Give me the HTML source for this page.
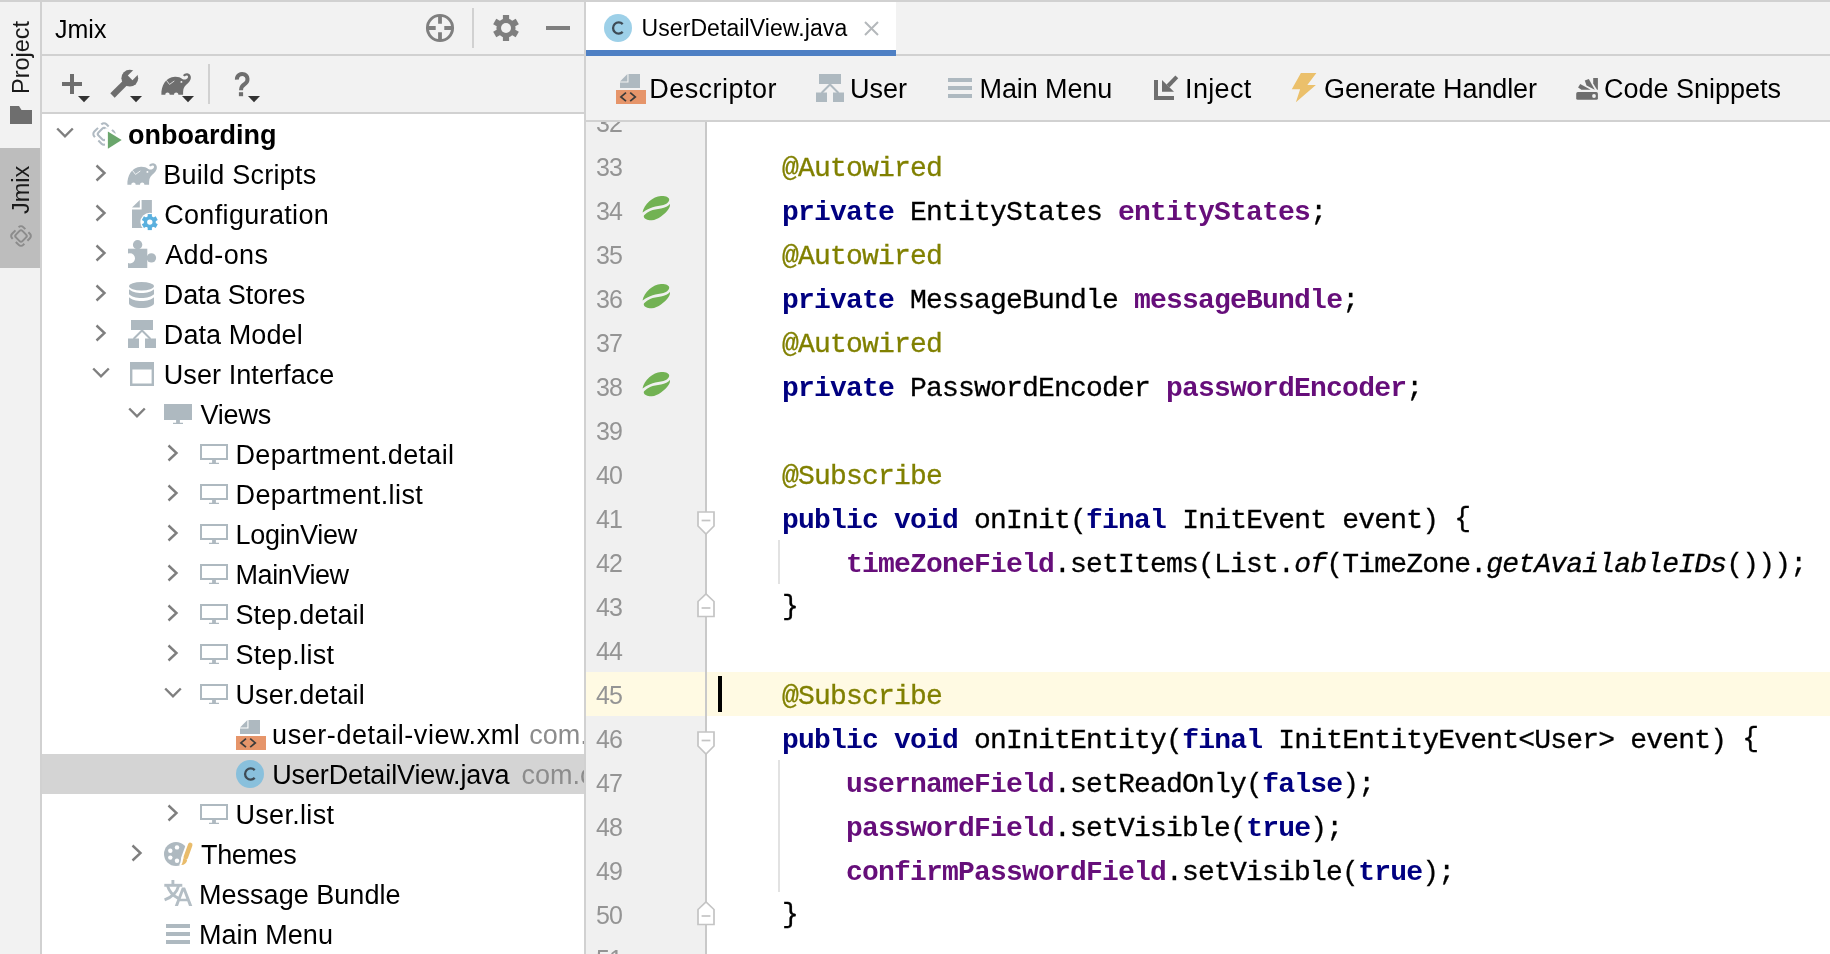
<!DOCTYPE html>
<html><head><meta charset="utf-8"><title>UserDetailView.java</title>
<style>
html,body{margin:0;padding:0}
body{width:1830px;height:954px;overflow:hidden;background:#fff;font-family:"Liberation Sans",sans-serif}
#root{position:absolute;left:0;top:0;width:1830px;height:954px;overflow:hidden;background:#fff;will-change:transform}
.b,.t,.i,.v,.clip,.ln,.c{position:absolute}
.i{display:block;overflow:visible}
.t{white-space:pre;font-family:"Liberation Sans",sans-serif}
.v{writing-mode:vertical-rl;transform:rotate(180deg);white-space:pre;width:26px;line-height:26px;color:#1a1a1a;text-align:center}
.clip{overflow:hidden}
.ln{left:10px;width:40px;font-family:"Liberation Sans",sans-serif;font-size:25px;letter-spacing:-1px;line-height:44px;color:#949494;white-space:pre}
.c{left:132px;font-family:"Liberation Mono",monospace;font-size:28px;letter-spacing:-0.8px;line-height:44px;color:#000;white-space:pre}
.c{-webkit-text-stroke:0.3px}.c b{-webkit-text-stroke:0}
.k{color:#000080}.a{color:#808000}.f{color:#660e7a}
.br{position:relative;top:-2px}
</style></head>
<body>
<div id="root">
<div class="b" style="left:0px;top:0px;width:1830px;height:2px;background:#d1d1d1;"></div>
<div class="b" style="left:0px;top:2px;width:40px;height:952px;background:#f2f2f2;"></div>
<div class="b" style="left:0px;top:148px;width:40px;height:120px;background:#bdbdbd;"></div>
<div class="b" style="left:40px;top:2px;width:2px;height:952px;background:#d1d1d1;"></div>
<div class="b" style="left:42px;top:2px;width:542px;height:52px;background:#f2f2f2;"></div>
<div class="b" style="left:42px;top:54px;width:542px;height:2px;background:#d1d1d1;"></div>
<div class="b" style="left:42px;top:56px;width:542px;height:56px;background:#f2f2f2;"></div>
<div class="b" style="left:42px;top:112px;width:542px;height:2px;background:#d1d1d1;"></div>
<div class="b" style="left:42px;top:754px;width:542px;height:40px;background:#d4d4d4;"></div>
<div class="b" style="left:584px;top:2px;width:2px;height:952px;background:#d1d1d1;"></div>
<div class="b" style="left:586px;top:2px;width:1244px;height:52px;background:#f2f2f2;"></div>
<div class="b" style="left:586px;top:2px;width:310px;height:52px;background:#fff;"></div>
<div class="b" style="left:586px;top:54px;width:1244px;height:2px;background:#d1d1d1;"></div>
<div class="b" style="left:586px;top:50px;width:310px;height:6px;background:#4f80c4;"></div>
<div class="b" style="left:586px;top:56px;width:1244px;height:64px;background:#f2f2f2;"></div>
<div class="b" style="left:586px;top:120px;width:1244px;height:2px;background:#d1d1d1;"></div>
<div class="b" style="left:586px;top:122px;width:119px;height:832px;background:#f0f0f0;"></div>
<div class="b" style="left:586px;top:672px;width:1244px;height:44px;background:#fffae3;"></div>
<div class="b" style="left:705px;top:122px;width:2px;height:832px;background:#c9c9c9;"></div>
<div class="b" style="left:718px;top:676px;width:4px;height:36px;background:#000;"></div>
<div class="b" style="left:778px;top:540px;width:1.5px;height:44px;background:#e2e2e2;"></div>
<div class="b" style="left:778px;top:760px;width:1.5px;height:132px;background:#e2e2e2;"></div>
<div id="vproj" class="v" style="left:8px;top:18px;height:78px;font-size:23.5px;letter-spacing:0px">Project</div>
<div id="vjmix" class="v" style="left:8px;top:163px;height:53px;font-size:23.5px;letter-spacing:0px">Jmix</div>
<svg class="i" style="left:10px;top:106px" width="22" height="18" viewBox="0 0 22 18" ><path d="M0 0H9L11.5 4H22V18H0Z" fill="#6e6e6e"/></svg>
<svg class="i" style="left:9px;top:223.5px" width="24" height="24" viewBox="0 0 24 24" ><g transform="translate(12 12) rotate(45)" fill="none" stroke="#8c8c8c" stroke-width="2" stroke-linecap="butt"><rect x="-7.9" y="-7.9" width="15.8" height="15.8" rx="3.2" stroke-dasharray="10.6 4.33" stroke-dashoffset="7.7"/><rect x="-4.6" y="-4.6" width="9.2" height="9.2" rx="2"/></g></svg>
<div id="hdr" class="t" style="left:55.0px;top:9px;font-size:25px;line-height:40px;color:#000;letter-spacing:0.0px;">Jmix</div>
<svg class="i" style="left:425px;top:13px" width="30" height="30" viewBox="0 0 30 30" ><circle cx="15" cy="15" r="12.6" fill="none" stroke="#7f7f7f" stroke-width="2.9"/><path d="M15 2V10.7M15 19.3V28M2 15H10.7M19.3 15H28" stroke="#7f7f7f" stroke-width="3.8"/></svg>
<div class="b" style="left:472px;top:8px;width:2px;height:40px;background:#d1d1d1;"></div>
<svg class="i" style="left:493px;top:15px" width="26" height="26" viewBox="0 0 26 26" ><g transform="translate(13 13)" fill="#7f7f7f"><rect x="-3.1" y="-13" width="6.2" height="8" transform="rotate(0)"/><rect x="-3.1" y="-13" width="6.2" height="8" transform="rotate(60)"/><rect x="-3.1" y="-13" width="6.2" height="8" transform="rotate(120)"/><rect x="-3.1" y="-13" width="6.2" height="8" transform="rotate(180)"/><rect x="-3.1" y="-13" width="6.2" height="8" transform="rotate(240)"/><rect x="-3.1" y="-13" width="6.2" height="8" transform="rotate(300)"/><circle r="9.6"/></g><circle cx="13" cy="13" r="5" fill="#f2f2f2"/></svg>
<div class="b" style="left:546px;top:26px;width:24px;height:4px;background:#7f7f7f;"></div>
<svg class="i" style="left:62px;top:74px" width="20" height="20" viewBox="0 0 20 20" ><path d="M10 0V20M0 10H20" stroke="#6e6e6e" stroke-width="4"/></svg>
<svg class="i" style="left:78.2px;top:95.7px" width="12" height="6.3" viewBox="0 0 12 6.3" ><path d="M0 0H12L6 6.3Z" fill="#333"/></svg>
<svg class="i" style="left:108px;top:68px" width="32" height="32" viewBox="0 0 32 32" ><g transform="translate(21.8 10.2) rotate(-45)"><circle r="8.4" fill="#6e6e6e"/><rect x="0.5" y="-3.3" width="10" height="6.6" fill="#f2f2f2"/><rect x="-24.5" y="-3.1" width="19" height="6.2" fill="#6e6e6e"/></g></svg>
<svg class="i" style="left:130.1px;top:95.7px" width="12" height="6.3" viewBox="0 0 12 6.3" ><path d="M0 0H12L6 6.3Z" fill="#333"/></svg>
<svg class="i" style="left:161px;top:73px" width="31" height="22" viewBox="0 0 31 22" ><path fill="#6e6e6e" d="M0.4 21.7C0.1 13 4.6 4 14 3.7C17 3.6 19.5 4.5 21.3 5.9C23 7.1 25.2 6.6 26.5 5.3C27.5 4.2 27.1 2.8 25.9 2.6C25 2.5 24.3 2.9 23.8 3.6L21.9 2.2C22.9 0.9 24.5 0.1 26.2 0.2C29.1 0.4 30.7 3.6 29.5 6.6C28.5 9.2 25.6 11.4 23.7 13.6C22.3 15.3 22.1 17.5 22.1 21.7L17.4 21.7C17.4 18.6 13 18.6 13 21.7L8.7 21.7C8.7 18.6 4.3 18.6 4.3 21.7Z"/><path d="M5.6 7.6L8.5 11.4L13 8.2" fill="none" stroke="#f2f2f2" stroke-width="0.8" stroke-linecap="round" stroke-linejoin="round"/><circle cx="20.4" cy="8.9" r="0.95" fill="#f2f2f2"/></svg>
<svg class="i" style="left:182.2px;top:95.7px" width="12" height="6.3" viewBox="0 0 12 6.3" ><path d="M0 0H12L6 6.3Z" fill="#333"/></svg>
<div class="b" style="left:208px;top:64px;width:2px;height:40px;background:#d1d1d1;"></div>
<svg class="i" style="left:230.5px;top:69px" width="22" height="30" viewBox="0 0 22 30" ><path d="M5.9 10.6A5.3 5.3 0 1 1 14.5 14.4C11.6 16.4 10 17.6 10 21.2" fill="none" stroke="#6e6e6e" stroke-width="4"/><rect x="7.9" y="23.2" width="4.2" height="4" fill="#6e6e6e"/></svg>
<svg class="i" style="left:248px;top:95.7px" width="12" height="6.3" viewBox="0 0 12 6.3" ><path d="M0 0H12L6 6.3Z" fill="#333"/></svg>
<div class="clip" style="left:42px;top:114px;width:542px;height:840px">
<svg class="i" style="left:14px;top:13px" width="18" height="12" viewBox="0 0 18 12" ><path d="M1.2 1.5 L9 9.3 L16.8 1.5" fill="none" stroke="#7f7f7f" stroke-width="2.4"/></svg>
<svg class="i" style="left:49px;top:7px" width="26" height="26" viewBox="0 0 24 24" ><g transform="translate(12 12) rotate(45)" fill="none" stroke="#b0bac2" stroke-width="1.9" stroke-linecap="butt"><rect x="-7.9" y="-7.9" width="15.8" height="15.8" rx="3.2" stroke-dasharray="10.6 4.33" stroke-dashoffset="7.7"/><rect x="-4.6" y="-4.6" width="9.2" height="9.2" rx="2"/></g></svg><svg class="i" style="left:63px;top:15px" width="18" height="22" viewBox="0 0 18 22" ><path d="M1.2 0.4L17.6 10.6L1.2 21.2Z" fill="#fff" stroke="#fff" stroke-width="2.4" stroke-linejoin="round"/><path d="M2.9 2.6L16.7 11L2.9 19.8Z" fill="#6aa66c"/></svg>
<div id="r0" class="t" style="left:86.1px;top:1px;font-size:27px;line-height:40px;color:#000;font-weight:bold;letter-spacing:-0.021px;">onboarding</div>
<svg class="i" style="left:53px;top:50px" width="12" height="18" viewBox="0 0 12 18" ><path d="M1.5 1.5 L9.5 9 L1.5 16.5" fill="none" stroke="#7f7f7f" stroke-width="2.4"/></svg>
<svg class="i" style="left:85px;top:49px" width="31" height="22" viewBox="0 0 31 22" ><path fill="#aeb9c0" d="M0.4 21.7C0.1 13 4.6 4 14 3.7C17 3.6 19.5 4.5 21.3 5.9C23 7.1 25.2 6.6 26.5 5.3C27.5 4.2 27.1 2.8 25.9 2.6C25 2.5 24.3 2.9 23.8 3.6L21.9 2.2C22.9 0.9 24.5 0.1 26.2 0.2C29.1 0.4 30.7 3.6 29.5 6.6C28.5 9.2 25.6 11.4 23.7 13.6C22.3 15.3 22.1 17.5 22.1 21.7L17.4 21.7C17.4 18.6 13 18.6 13 21.7L8.7 21.7C8.7 18.6 4.3 18.6 4.3 21.7Z"/><path d="M5.6 7.6L8.5 11.4L13 8.2" fill="none" stroke="#fff" stroke-width="0.8" stroke-linecap="round" stroke-linejoin="round"/><circle cx="20.4" cy="8.9" r="0.95" fill="#fff"/></svg>
<div id="r1" class="t" style="left:121.2px;top:41px;font-size:27px;line-height:40px;color:#000;letter-spacing:0.25px;">Build Scripts</div>
<svg class="i" style="left:53px;top:90px" width="12" height="18" viewBox="0 0 12 18" ><path d="M1.5 1.5 L9.5 9 L1.5 16.5" fill="none" stroke="#7f7f7f" stroke-width="2.4"/></svg>
<svg class="i" style="left:90px;top:86px" width="27" height="31" viewBox="0 0 27 31" ><path d="M0 7.6L7.8 0V7.6Z" fill="#aeb9c0"/><path d="M9.6 0H19.9V28H0V9.5H9.6Z" fill="#aeb9c0"/><circle cx="17.8" cy="22.1" r="9.4" fill="#fff"/><g transform="translate(17.8 22.1)"><g fill="#5bb0de"><rect x="-2.1" y="-8" width="4.2" height="5" transform="rotate(0)"/><rect x="-2.1" y="-8" width="4.2" height="5" transform="rotate(60)"/><rect x="-2.1" y="-8" width="4.2" height="5" transform="rotate(120)"/><rect x="-2.1" y="-8" width="4.2" height="5" transform="rotate(180)"/><rect x="-2.1" y="-8" width="4.2" height="5" transform="rotate(240)"/><rect x="-2.1" y="-8" width="4.2" height="5" transform="rotate(300)"/><circle r="6"/></g><circle r="2.7" fill="#fff"/></g></svg>
<div id="r2" class="t" style="left:122.2px;top:81px;font-size:27px;line-height:40px;color:#000;letter-spacing:0.333px;">Configuration</div>
<svg class="i" style="left:53px;top:130px" width="12" height="18" viewBox="0 0 12 18" ><path d="M1.5 1.5 L9.5 9 L1.5 16.5" fill="none" stroke="#7f7f7f" stroke-width="2.4"/></svg>
<svg class="i" style="left:86px;top:126px" width="29" height="28" viewBox="0 0 29 28" ><g fill="#aeb9c0"><rect x="0" y="8.7" width="19.3" height="19.3"/><circle cx="9.6" cy="4.7" r="4.7"/><circle cx="23.4" cy="17.9" r="4.7"/></g><circle cx="1.9" cy="18.3" r="5.1" fill="#fff"/></svg>
<div id="r3" class="t" style="left:123.2px;top:121px;font-size:27px;line-height:40px;color:#000;letter-spacing:0.368px;">Add-ons</div>
<svg class="i" style="left:53px;top:170px" width="12" height="18" viewBox="0 0 12 18" ><path d="M1.5 1.5 L9.5 9 L1.5 16.5" fill="none" stroke="#7f7f7f" stroke-width="2.4"/></svg>
<svg class="i" style="left:87px;top:168px" width="25" height="26" viewBox="0 0 25 26" ><g fill="#aeb9c0"><ellipse cx="12.5" cy="4.2" rx="12.5" ry="4.2"/><path d="M0 7.300c2.300 2.400 7 3.700 12.5 3.700s10.2-1.300 12.5-3.700v5c-2.300 2.400-7 3.700-12.5 3.700S2.300 14.700 0 12.300z"/><path d="M0 15.300c2.300 2.400 7 3.700 12.5 3.700s10.2-1.300 12.5-3.700v5.900c0 2.5-5.600 4.800-12.5 4.800S0 23.700 0 21.2z"/></g></svg>
<div id="r4" class="t" style="left:121.8px;top:161px;font-size:27px;line-height:40px;color:#000;letter-spacing:-0.1px;">Data Stores</div>
<svg class="i" style="left:53px;top:210px" width="12" height="18" viewBox="0 0 12 18" ><path d="M1.5 1.5 L9.5 9 L1.5 16.5" fill="none" stroke="#7f7f7f" stroke-width="2.4"/></svg>
<svg class="i" style="left:86px;top:206px" width="28" height="28" viewBox="0 0 28 28" ><g fill="#aeb9c0"><rect x="3" y="0" width="22" height="10"/><rect x="0" y="18.5" width="11" height="9.5"/><rect x="17" y="18.5" width="11" height="9.5"/></g><path d="M5.5 19L14 10.5L22.5 19" fill="none" stroke="#aeb9c0" stroke-width="2"/></svg>
<div id="r5" class="t" style="left:121.8px;top:201px;font-size:27px;line-height:40px;color:#000;letter-spacing:0.09px;">Data Model</div>
<svg class="i" style="left:50px;top:253px" width="18" height="12" viewBox="0 0 18 12" ><path d="M1.2 1.5 L9 9.3 L16.8 1.5" fill="none" stroke="#7f7f7f" stroke-width="2.4"/></svg>
<svg class="i" style="left:88px;top:248px" width="24" height="24" viewBox="0 0 24 24" ><path d="M0 0H24V24H0Z M2.4 7.5V21.6H21.6V7.5Z" fill="#aeb9c0" fill-rule="evenodd"/></svg>
<div id="r6" class="t" style="left:121.8px;top:241px;font-size:27px;line-height:40px;color:#000;letter-spacing:0.077px;">User Interface</div>
<svg class="i" style="left:86px;top:293px" width="18" height="12" viewBox="0 0 18 12" ><path d="M1.2 1.5 L9 9.3 L16.8 1.5" fill="none" stroke="#7f7f7f" stroke-width="2.4"/></svg>
<svg class="i" style="left:122px;top:290px" width="28" height="20" viewBox="0 0 28 20" ><path d="M0 0H28V16H0Z" fill="#aeb9c0"/><path d="M12.1 16H15.9V18.8H19V20.1H9V18.8H12.1Z" fill="#aeb9c0"/></svg>
<div id="r7" class="t" style="left:158.6px;top:281px;font-size:27px;line-height:40px;color:#000;letter-spacing:-0.25px;">Views</div>
<svg class="i" style="left:125px;top:330px" width="12" height="18" viewBox="0 0 12 18" ><path d="M1.5 1.5 L9.5 9 L1.5 16.5" fill="none" stroke="#7f7f7f" stroke-width="2.4"/></svg>
<svg class="i" style="left:158px;top:330px" width="28" height="20" viewBox="0 0 28 20" ><path d="M0 0H28V16H0Z M2 2V14H26V2Z" fill="#aeb9c0" fill-rule="evenodd"/><path d="M12.1 16H15.9V18.8H19V20.1H9V18.8H12.1Z" fill="#aeb9c0"/></svg>
<div id="r8" class="t" style="left:193.5px;top:321px;font-size:27px;line-height:40px;color:#000;letter-spacing:0.337px;">Department.detail</div>
<svg class="i" style="left:125px;top:370px" width="12" height="18" viewBox="0 0 12 18" ><path d="M1.5 1.5 L9.5 9 L1.5 16.5" fill="none" stroke="#7f7f7f" stroke-width="2.4"/></svg>
<svg class="i" style="left:158px;top:370px" width="28" height="20" viewBox="0 0 28 20" ><path d="M0 0H28V16H0Z M2 2V14H26V2Z" fill="#aeb9c0" fill-rule="evenodd"/><path d="M12.1 16H15.9V18.8H19V20.1H9V18.8H12.1Z" fill="#aeb9c0"/></svg>
<div id="r9" class="t" style="left:193.5px;top:361px;font-size:27px;line-height:40px;color:#000;letter-spacing:0.413px;">Department.list</div>
<svg class="i" style="left:125px;top:410px" width="12" height="18" viewBox="0 0 12 18" ><path d="M1.5 1.5 L9.5 9 L1.5 16.5" fill="none" stroke="#7f7f7f" stroke-width="2.4"/></svg>
<svg class="i" style="left:158px;top:410px" width="28" height="20" viewBox="0 0 28 20" ><path d="M0 0H28V16H0Z M2 2V14H26V2Z" fill="#aeb9c0" fill-rule="evenodd"/><path d="M12.1 16H15.9V18.8H19V20.1H9V18.8H12.1Z" fill="#aeb9c0"/></svg>
<div id="r10" class="t" style="left:193.5px;top:401px;font-size:27px;line-height:40px;color:#000;letter-spacing:-0.294px;">LoginView</div>
<svg class="i" style="left:125px;top:450px" width="12" height="18" viewBox="0 0 12 18" ><path d="M1.5 1.5 L9.5 9 L1.5 16.5" fill="none" stroke="#7f7f7f" stroke-width="2.4"/></svg>
<svg class="i" style="left:158px;top:450px" width="28" height="20" viewBox="0 0 28 20" ><path d="M0 0H28V16H0Z M2 2V14H26V2Z" fill="#aeb9c0" fill-rule="evenodd"/><path d="M12.1 16H15.9V18.8H19V20.1H9V18.8H12.1Z" fill="#aeb9c0"/></svg>
<div id="r11" class="t" style="left:193.5px;top:441px;font-size:27px;line-height:40px;color:#000;letter-spacing:-0.428px;">MainView</div>
<svg class="i" style="left:125px;top:490px" width="12" height="18" viewBox="0 0 12 18" ><path d="M1.5 1.5 L9.5 9 L1.5 16.5" fill="none" stroke="#7f7f7f" stroke-width="2.4"/></svg>
<svg class="i" style="left:158px;top:490px" width="28" height="20" viewBox="0 0 28 20" ><path d="M0 0H28V16H0Z M2 2V14H26V2Z" fill="#aeb9c0" fill-rule="evenodd"/><path d="M12.1 16H15.9V18.8H19V20.1H9V18.8H12.1Z" fill="#aeb9c0"/></svg>
<div id="r12" class="t" style="left:193.4px;top:481px;font-size:27px;line-height:40px;color:#000;letter-spacing:0.18px;">Step.detail</div>
<svg class="i" style="left:125px;top:530px" width="12" height="18" viewBox="0 0 12 18" ><path d="M1.5 1.5 L9.5 9 L1.5 16.5" fill="none" stroke="#7f7f7f" stroke-width="2.4"/></svg>
<svg class="i" style="left:158px;top:530px" width="28" height="20" viewBox="0 0 28 20" ><path d="M0 0H28V16H0Z M2 2V14H26V2Z" fill="#aeb9c0" fill-rule="evenodd"/><path d="M12.1 16H15.9V18.8H19V20.1H9V18.8H12.1Z" fill="#aeb9c0"/></svg>
<div id="r13" class="t" style="left:193.4px;top:521px;font-size:27px;line-height:40px;color:#000;letter-spacing:0.325px;">Step.list</div>
<svg class="i" style="left:122px;top:573px" width="18" height="12" viewBox="0 0 18 12" ><path d="M1.2 1.5 L9 9.3 L16.8 1.5" fill="none" stroke="#7f7f7f" stroke-width="2.4"/></svg>
<svg class="i" style="left:158px;top:570px" width="28" height="20" viewBox="0 0 28 20" ><path d="M0 0H28V16H0Z M2 2V14H26V2Z" fill="#aeb9c0" fill-rule="evenodd"/><path d="M12.1 16H15.9V18.8H19V20.1H9V18.8H12.1Z" fill="#aeb9c0"/></svg>
<div id="r14" class="t" style="left:193.4px;top:561px;font-size:27px;line-height:40px;color:#000;letter-spacing:0.18px;">User.detail</div>
<svg class="i" style="left:194px;top:606px" width="30" height="30" viewBox="0 0 30 30" ><path d="M12.5 0H24V14H4V8.6H12.5Z" fill="#aeb9c0"/><path d="M4 7.4L11.4 0V7.4Z" fill="#aeb9c0"/><rect x="0" y="16" width="30" height="14" fill="#e6956a"/><path d="M10 18.6L4.9 22.9L10 27.2M14.2 18.6L19.3 22.9L14.2 27.2" fill="none" stroke="#3b3b3b" stroke-width="1.7"/></svg>
<div id="r15" class="t" style="left:230.1px;top:601px;font-size:27px;line-height:40px;color:#000;letter-spacing:0.559px;">user-detail-view.xml</div>
<svg class="i" style="left:194px;top:646px" width="28" height="28" viewBox="0 0 28 28" ><circle cx="14" cy="14" r="14" fill="#89c0dc"/><path d="M18.7 10.1A5.6 5.6 0 1 0 18.7 17.9" fill="none" stroke="#3e4b55" stroke-width="2.3"/></svg>
<div id="r16" class="t" style="left:230.2px;top:641px;font-size:27px;line-height:40px;color:#000;letter-spacing:-0.122px;">UserDetailView.java</div>
<svg class="i" style="left:125px;top:690px" width="12" height="18" viewBox="0 0 12 18" ><path d="M1.5 1.5 L9.5 9 L1.5 16.5" fill="none" stroke="#7f7f7f" stroke-width="2.4"/></svg>
<svg class="i" style="left:158px;top:690px" width="28" height="20" viewBox="0 0 28 20" ><path d="M0 0H28V16H0Z M2 2V14H26V2Z" fill="#aeb9c0" fill-rule="evenodd"/><path d="M12.1 16H15.9V18.8H19V20.1H9V18.8H12.1Z" fill="#aeb9c0"/></svg>
<div id="r17" class="t" style="left:193.4px;top:681px;font-size:27px;line-height:40px;color:#000;letter-spacing:0.325px;">User.list</div>
<svg class="i" style="left:89px;top:730px" width="12" height="18" viewBox="0 0 12 18" ><path d="M1.5 1.5 L9.5 9 L1.5 16.5" fill="none" stroke="#7f7f7f" stroke-width="2.4"/></svg>
<svg class="i" style="left:121.8px;top:727.8px" width="30" height="25" viewBox="0 0 30 25" ><circle cx="12" cy="12.1" r="12" fill="#aeb9c0"/><g fill="#fff"><circle cx="6.3" cy="8.7" r="2.2"/><circle cx="13" cy="5.4" r="2.2"/><circle cx="6.3" cy="15.6" r="2.2"/><circle cx="13" cy="18.7" r="2.2"/></g><path d="M26.2 2.9L21.4 16.1" stroke="#fff" stroke-width="8.4" stroke-linecap="round"/><path d="M19.2 16.6L23 18C22.6 21 20.5 22.8 17.4 22.9C18.8 21.3 18.6 18.8 19.2 16.6Z" fill="#fff" stroke="#fff" stroke-width="4" stroke-linejoin="round"/><path d="M26.2 2.9L21.8 15.2" stroke="#e9bc6b" stroke-width="4.6" stroke-linecap="round"/><path d="M19.4 16.3L23.2 17.7C22.8 20.9 20.6 22.9 17.3 23C18.8 21.3 18.7 18.7 19.4 16.3Z" fill="#e9bc6b"/></svg>
<div id="r18" class="t" style="left:159.0px;top:721px;font-size:27px;line-height:40px;color:#000;letter-spacing:-0.36px;">Themes</div>
<svg class="i" style="left:121.5px;top:766px" width="29" height="27" viewBox="0 0 29 27" ><g fill="none" stroke="#b4bec5" stroke-width="2.9"><path d="M0.3 5.3H18.3"/><path d="M8.9 0V5.3"/><path d="M14.6 5.8C13 12 8 17 0.6 19.9"/><path d="M3.6 5.8C5 11 9 15.6 14.5 18.4"/></g><path fill="#b4bec5" fill-rule="evenodd" d="M17.9 7.5H21.1L28.3 26H25L23.3 21.3H15.7L14 26H10.8ZM19.5 11.2L16.7 18.7H22.3Z"/></svg>
<div id="r19" class="t" style="left:157.0px;top:761px;font-size:27px;line-height:40px;color:#000;letter-spacing:0.026px;">Message Bundle</div>
<svg class="i" style="left:124px;top:810px" width="24" height="20" viewBox="0 0 24 20" ><g fill="#aeb9c0"><rect y="0" width="24" height="4"/><rect y="8" width="24" height="4"/><rect y="16" width="24" height="4"/></g></svg>
<div id="r20" class="t" style="left:157.0px;top:801px;font-size:27px;line-height:40px;color:#000;letter-spacing:0.044px;">Main Menu</div>
<div id="g15" class="t" style="left:487.3px;top:601px;font-size:27px;line-height:40px;color:#8c8c8c;letter-spacing:0px;">com.company</div>
<div id="g16" class="t" style="left:479.4px;top:641px;font-size:27px;line-height:40px;color:#8c8c8c;letter-spacing:0px;">com.company</div>
</div>
<svg class="i" style="left:604px;top:14px" width="28" height="28" viewBox="0 0 28 28" ><circle cx="14" cy="14" r="14" fill="#9dd0e8"/><path d="M18.7 10.1A5.6 5.6 0 1 0 18.7 17.9" fill="none" stroke="#3e4b55" stroke-width="2.3"/></svg>
<div id="tab" class="t" style="left:641.5px;top:8px;font-size:23px;line-height:40px;color:#000;letter-spacing:0.087px;">UserDetailView.java</div>
<svg class="i" style="left:864px;top:21px" width="15" height="15" viewBox="0 0 15 15" ><path d="M1 1L14 14M14 1L1 14" stroke="#b4b8bb" stroke-width="2"/></svg>
<svg class="i" style="left:616px;top:74px" width="30" height="30" viewBox="0 0 30 30" ><path d="M12.5 0H24V14H4V8.6H12.5Z" fill="#aeb9c0"/><path d="M4 7.4L11.4 0V7.4Z" fill="#aeb9c0"/><rect x="0" y="16" width="30" height="14" fill="#e6956a"/><path d="M10 18.6L4.9 22.9L10 27.2M14.2 18.6L19.3 22.9L14.2 27.2" fill="none" stroke="#3b3b3b" stroke-width="1.7"/></svg>
<div id="tb0" class="t" style="left:649.2px;top:69px;font-size:27px;line-height:40px;color:#000;letter-spacing:0.471px;">Descriptor</div>
<svg class="i" style="left:816px;top:74px" width="28" height="28" viewBox="0 0 28 28" ><g fill="#aeb9c0"><rect x="3" y="0" width="22" height="10"/><rect x="0" y="18.5" width="11" height="9.5"/><rect x="17" y="18.5" width="11" height="9.5"/></g><path d="M5.5 19L14 10.5L22.5 19" fill="none" stroke="#aeb9c0" stroke-width="2"/></svg>
<div id="tb1" class="t" style="left:849.9px;top:69px;font-size:27px;line-height:40px;color:#000;letter-spacing:0.0px;">User</div>
<svg class="i" style="left:948px;top:78px" width="24" height="20" viewBox="0 0 24 20" ><g fill="#aeb9c0"><rect y="0" width="24" height="4"/><rect y="8" width="24" height="4"/><rect y="16" width="24" height="4"/></g></svg>
<div id="tb2" class="t" style="left:979.5px;top:69px;font-size:27px;line-height:40px;color:#000;letter-spacing:-0.106px;">Main Menu</div>
<svg class="i" style="left:1154px;top:75px" width="25" height="25" viewBox="0 0 25 25" ><path d="M0 5H4V21H20V25H0Z" fill="#6e6e6e"/><path d="M8 5V16.8H20Z" fill="#6e6e6e"/><path d="M14 11L22.8 1.9" stroke="#6e6e6e" stroke-width="4"/></svg>
<div id="tb3" class="t" style="left:1185.1px;top:69px;font-size:27px;line-height:40px;color:#000;letter-spacing:0.32px;">Inject</div>
<svg class="i" style="left:1291px;top:72px" width="26" height="31" viewBox="0 0 26 31" ><path d="M9.9 1H25.4L16.3 13H24.9L4.9 30.3L9.1 17.2H0.8Z" fill="#ebc06b"/></svg>
<div id="tb4" class="t" style="left:1324.0px;top:69px;font-size:27px;line-height:40px;color:#000;letter-spacing:-0.109px;">Generate Handler</div>
<svg class="i" style="left:1576px;top:78px" width="22" height="22" viewBox="0 0 22 22" ><rect x="0.2" y="14.1" width="21.7" height="7.7" rx="1.6" fill="#6e6e6e"/><circle cx="18" cy="18" r="1.9" fill="#f2f2f2"/><g fill="#6e6e6e"><path d="M17.2 0.1H21.9V11.8H21L17.2 5.5Z"/><path d="M8.8 2.6L12.8 1L18.8 11.8L10.5 7.6Z"/><path d="M4.2 6.1L14.7 11.8H5.4L2.1 9.5Z"/></g></svg>
<div id="tb5" class="t" style="left:1604.0px;top:69px;font-size:27px;line-height:40px;color:#000;letter-spacing:-0.019px;">Code Snippets</div>
<div class="clip" style="left:586px;top:122px;width:1244px;height:832px">
<div class="ln" style="top:-21px">32</div>
<div class="ln" style="top:23px">33</div>
<div class="c" style="top:25px">    <span class="a">@Autowired</span></div>
<div class="ln" style="top:67px">34</div>
<div class="c" style="top:69px">    <b class="k">private</b> EntityStates <b class="f">entityStates</b>;</div>
<div class="ln" style="top:111px">35</div>
<div class="c" style="top:113px">    <span class="a">@Autowired</span></div>
<div class="ln" style="top:155px">36</div>
<div class="c" style="top:157px">    <b class="k">private</b> MessageBundle <b class="f">messageBundle</b>;</div>
<div class="ln" style="top:199px">37</div>
<div class="c" style="top:201px">    <span class="a">@Autowired</span></div>
<div class="ln" style="top:243px">38</div>
<div class="c" style="top:245px">    <b class="k">private</b> PasswordEncoder <b class="f">passwordEncoder</b>;</div>
<div class="ln" style="top:287px">39</div>
<div class="ln" style="top:331px">40</div>
<div class="c" style="top:333px">    <span class="a">@Subscribe</span></div>
<div class="ln" style="top:375px">41</div>
<div class="c" style="top:377px">    <b class="k">public</b> <b class="k">void</b> onInit(<b class="k">final</b> InitEvent event) <span class="br">{</span></div>
<div class="ln" style="top:419px">42</div>
<div class="c" style="top:421px">        <b class="f">timeZoneField</b>.setItems(List.<i>of</i>(TimeZone.<i>getAvailableIDs</i>()));</div>
<div class="ln" style="top:463px">43</div>
<div class="c" style="top:465px">    <span class="br">}</span></div>
<div class="ln" style="top:507px">44</div>
<div class="ln" style="top:551px">45</div>
<div class="c" style="top:553px">    <span class="a">@Subscribe</span></div>
<div class="ln" style="top:595px">46</div>
<div class="c" style="top:597px">    <b class="k">public</b> <b class="k">void</b> onInitEntity(<b class="k">final</b> InitEntityEvent&lt;User&gt; event) <span class="br">{</span></div>
<div class="ln" style="top:639px">47</div>
<div class="c" style="top:641px">        <b class="f">usernameField</b>.setReadOnly(<b class="k">false</b>);</div>
<div class="ln" style="top:683px">48</div>
<div class="c" style="top:685px">        <b class="f">passwordField</b>.setVisible(<b class="k">true</b>);</div>
<div class="ln" style="top:727px">49</div>
<div class="c" style="top:729px">        <b class="f">confirmPasswordField</b>.setVisible(<b class="k">true</b>);</div>
<div class="ln" style="top:771px">50</div>
<div class="c" style="top:773px">    <span class="br">}</span></div>
<div class="ln" style="top:815px">51</div>
<svg class="i" style="left:56px;top:73px" width="29" height="26" viewBox="0 0 29 26" ><path fill="#72b253" d="M0.5 17.6C2 9 11 1.2 19 0.9C23.5 0.7 27.6 2.2 27.2 4.9C26.5 8.5 22 10 19 10.5C15 11.2 11.5 11.8 8.1 13.2C5 14.5 2.5 16 0.5 17.6Z"/><path fill="#72b253" d="M2.1 20.3C4 18.5 6 17 8.1 16C11.5 14.5 15 14.2 19 13.5C23 12.8 26.5 11.5 27.8 9.1C28.3 10.5 27.8 12.2 26.7 13.8C25 16.5 22.5 19.2 19 21.4C16 23.5 13 25 9.7 25.2C6 25.4 2.2 24 1.8 21.7C1.7 21.2 1.8 20.7 2.1 20.3Z"/></svg>
<svg class="i" style="left:56px;top:161px" width="29" height="26" viewBox="0 0 29 26" ><path fill="#72b253" d="M0.5 17.6C2 9 11 1.2 19 0.9C23.5 0.7 27.6 2.2 27.2 4.9C26.5 8.5 22 10 19 10.5C15 11.2 11.5 11.8 8.1 13.2C5 14.5 2.5 16 0.5 17.6Z"/><path fill="#72b253" d="M2.1 20.3C4 18.5 6 17 8.1 16C11.5 14.5 15 14.2 19 13.5C23 12.8 26.5 11.5 27.8 9.1C28.3 10.5 27.8 12.2 26.7 13.8C25 16.5 22.5 19.2 19 21.4C16 23.5 13 25 9.7 25.2C6 25.4 2.2 24 1.8 21.7C1.7 21.2 1.8 20.7 2.1 20.3Z"/></svg>
<svg class="i" style="left:56px;top:249px" width="29" height="26" viewBox="0 0 29 26" ><path fill="#72b253" d="M0.5 17.6C2 9 11 1.2 19 0.9C23.5 0.7 27.6 2.2 27.2 4.9C26.5 8.5 22 10 19 10.5C15 11.2 11.5 11.8 8.1 13.2C5 14.5 2.5 16 0.5 17.6Z"/><path fill="#72b253" d="M2.1 20.3C4 18.5 6 17 8.1 16C11.5 14.5 15 14.2 19 13.5C23 12.8 26.5 11.5 27.8 9.1C28.3 10.5 27.8 12.2 26.7 13.8C25 16.5 22.5 19.2 19 21.4C16 23.5 13 25 9.7 25.2C6 25.4 2.2 24 1.8 21.7C1.7 21.2 1.8 20.7 2.1 20.3Z"/></svg>
<svg class="i" style="left:111px;top:388.5px" width="18" height="25" viewBox="0 0 18 25" ><path d="M1 1H17V15L9 23L1 15Z" fill="#fff" stroke="#c4c4c4" stroke-width="1.7"/><path d="M4.6 9.5H13.4" stroke="#c4c4c4" stroke-width="1.7"/></svg>
<svg class="i" style="left:111px;top:608.5px" width="18" height="25" viewBox="0 0 18 25" ><path d="M1 1H17V15L9 23L1 15Z" fill="#fff" stroke="#c4c4c4" stroke-width="1.7"/><path d="M4.6 9.5H13.4" stroke="#c4c4c4" stroke-width="1.7"/></svg>
<svg class="i" style="left:111px;top:471px" width="18" height="25" viewBox="0 0 18 25" ><path d="M1 23.5H17V8.5L9 1L1 8.5Z" fill="#fff" stroke="#c4c4c4" stroke-width="1.7"/><path d="M4.6 15H13.4" stroke="#c4c4c4" stroke-width="1.7"/></svg>
<svg class="i" style="left:111px;top:779px" width="18" height="25" viewBox="0 0 18 25" ><path d="M1 23.5H17V8.5L9 1L1 8.5Z" fill="#fff" stroke="#c4c4c4" stroke-width="1.7"/><path d="M4.6 15H13.4" stroke="#c4c4c4" stroke-width="1.7"/></svg>
</div>
</div>
</body></html>
